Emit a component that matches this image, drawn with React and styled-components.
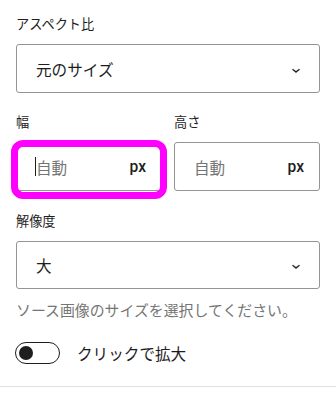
import styled, { createGlobalStyle } from 'styled-components';

const GlobalStyle = createGlobalStyle`
  body {
    margin: 0;
    background: #fff;
    font-family: "Roboto", "Noto Sans CJK JP", sans-serif;
    color: #1e1e1e;
  }
`;

const Panel = styled.div`
  width: 336px;
  height: 396px;
  box-sizing: border-box;
  padding: 17px 16px 0;
  overflow: hidden;
`;

const Label = styled.div`
  font-size: 13.2px;
  line-height: 16px;
  height: 16px;
  margin-bottom: 11px;
`;

const Select = styled.div`
  display: flex;
  align-items: center;
  justify-content: space-between;
  box-sizing: border-box;
  height: ${(p) => p.$h || 49}px;
  border: 1px solid #949494;
  border-radius: 3px;
  padding: 0 15px 0 19px;
  font-size: 15.6px;
`;

const Chevron = () => (
  <svg width="16" height="16" viewBox="0 0 24 24" style={{ marginTop: 2 }}>
    <path
      d="M17.5 11.6L12 16l-5.5-4.4.9-1.2L12 14l4.6-3.6 1 1.2z"
      fill="#1e1e1e"
      stroke="#1e1e1e"
      strokeWidth="0.6"
    />
  </svg>
);

const SizeRow = styled.div`
  display: grid;
  grid-template-columns: 1fr 1fr;
  column-gap: 12px;
  margin-top: 22px;
  margin-bottom: 23px;
`;

const Field = styled.div`
  position: relative;
`;

const Placeholder = styled.span`
  color: #757575;
  display: flex;
  align-items: center;
`;

const Caret = styled.span`
  display: inline-block;
  width: 1px;
  height: 19px;
  background: #1e1e1e;
  margin-left: -1px;
`;

const Unit = styled.span`
  font-family: "Roboto", sans-serif;
  font-size: 15.6px;
  font-weight: 500;
  color: #1e1e1e;
`;

const Highlight = styled.span`
  position: absolute;
  left: -5px;
  top: 25px;
  width: 156px;
  height: 59px;
  box-sizing: border-box;
  border: 7px solid #ff00ff;
  border-radius: 12px;
  pointer-events: none;
`;

const Help = styled.p`
  margin: 12px 0 0;
  font-size: 14.9px;
  line-height: 20px;
  color: #757575;
  white-space: nowrap;
`;

const ToggleRow = styled.div`
  display: flex;
  align-items: center;
  gap: 17px;
  margin-top: 21px;
  height: 22px;
  margin-left: -1px;
  font-size: 15.6px;
`;

const Track = styled.span`
  display: flex;
  align-items: center;
  box-sizing: border-box;
  width: 45px;
  height: 22px;
  border: 1.5px solid #1e1e1e;
  border-radius: 11px;
  padding-left: 3px;
`;

const Knob = styled.span`
  width: 14px;
  height: 14px;
  border-radius: 50%;
  background: #1e1e1e;
`;

const Divider = styled.div`
  margin: 22px -16px 0;
  border-top: 1px solid #e0e0e0;
`;

export default function App() {
  return (
    <>
      <GlobalStyle />
      <Panel>
        <Label>アスペクト比</Label>
        <Select>
          <span>元のサイズ</span>
          <Chevron />
        </Select>

        <SizeRow>
          <Field>
            <Label>幅</Label>
            <Select>
              <Placeholder>
                <Caret />
                自動
              </Placeholder>
              <Unit>px</Unit>
            </Select>
            <Highlight />
          </Field>
          <Field>
            <Label>高さ</Label>
            <Select>
              <Placeholder>自動</Placeholder>
              <Unit>px</Unit>
            </Select>
          </Field>
        </SizeRow>

        <Label>解像度</Label>
        <Select $h={48}>
          <span>大</span>
          <Chevron />
        </Select>
        <Help>ソース画像のサイズを選択してください。</Help>

        <ToggleRow>
          <Track>
            <Knob />
          </Track>
          <span>クリックで拡大</span>
        </ToggleRow>
        <Divider />
      </Panel>
    </>
  );
}
